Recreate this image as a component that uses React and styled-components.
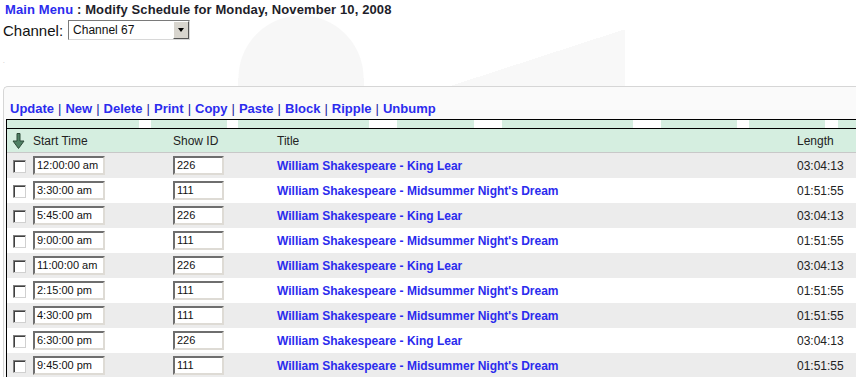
import React from 'react';
import styled, { createGlobalStyle } from 'styled-components';

const GlobalStyle = createGlobalStyle`
  body {
    margin: 0;
    font-family: 'Liberation Sans', Arial, sans-serif;
    color: #222;
    background-color: #fff;
    background-image:
      radial-gradient(circle 63px at 301px 78px, #f7f7f7 62px, transparent 63px),
      linear-gradient(#f7f7f7, #f7f7f7),
      linear-gradient(162deg, transparent 52%, #f8f8f8 52%);
    background-repeat: no-repeat;
    background-position: 0 0, 238px 78px, 420px 30px;
    background-size: auto, 126px 20px, 205px 60px;
    overflow: hidden;
  }
`;

const Page = styled.div`
  width: 856px;
  height: 377px;
  overflow: hidden;
`;

const Heading = styled.div`
  padding: 3px 0 0 5px;
  font-size: 13px;
  line-height: 14px;
  font-weight: bold;
  letter-spacing: 0.12px;
  color: #1e1e2a;
`;

const MenuLink = styled.a`
  color: #2b2bee;
  text-decoration: none;
`;

const ChannelRow = styled.div`
  display: flex;
  align-items: center;
  gap: 5px;
  margin-top: 3px;
  padding-left: 3px;
  font-size: 15px;
  color: #111;
`;

const Select = styled.div`
  display: flex;
  width: 122px;
  height: 20px;
  box-sizing: border-box;
  border-top: 1px solid #7a7a7a;
  border-left: 1px solid #7a7a7a;
  border-right: 1px solid #d8d8d8;
  border-bottom: 1px solid #d8d8d8;
  background: #fff;
  font-size: 12px;
`;

const SelectText = styled.div`
  flex: 1;
  padding: 2px 0 0 4px;
  color: #111;
`;

const SelectButton = styled.div`
  width: 16px;
  background: #d8d5ce;
  border: 1px solid;
  border-color: #fff #555 #555 #fff;
  box-sizing: border-box;
  display: flex;
  align-items: center;
  justify-content: center;

  &::after {
    content: '';
    border-left: 3.5px solid transparent;
    border-right: 3.5px solid transparent;
    border-top: 4px solid #000;
  }
`;

const Speck = styled.div`
  height: 46px;
  padding: 18px 0 0 3px;
  box-sizing: border-box;
  font-size: 6px;
  color: #999;
  line-height: 6px;
`;

const Panel = styled.div`
  margin-left: 3px;
  border-top: 1px solid #d6d6d6;
  border-left: 1px solid #d6d6d6;
  border-top-left-radius: 5px;
  background: #fafafa;
`;

const Toolbar = styled.div`
  display: flex;
  align-items: center;
  padding: 11px 0 0 6px;
  height: 21px;
  font-size: 13px;
  font-weight: bold;
`;

const ToolLink = styled.a`
  color: #2b2bee;
  text-decoration: none;
`;

const Sep = styled.span`
  color: #2020a0;
  font-weight: normal;
  margin: 0 4px;
`;

const Table = styled.div`
  margin: 0 0 0 2px;
  border-top: 1px solid #000;
  border-left: 1px solid #000;
  background: #fff;
`;

const Strip = styled.div`
  display: flex;
  height: 8px;
  border-bottom: 1px solid #000;
  background: #fff;
`;

const StripCell = styled.div`
  flex: none;
  width: ${p => p.$w}px;
  margin-right: ${p => p.$gap}px;
  background: #d5eee0;
`;

const Row = styled.div`
  display: grid;
  grid-template-columns: 26px 140px 104px 520px 1fr;
  align-items: center;
  height: ${p => (p.$head ? 23 : 25)}px;
  background: ${p => (p.$head ? '#d5eee0' : p.$shade ? '#ececec' : '#fff')};
  border-bottom: ${p => (p.$head ? '1px solid #c8c8c8' : 'none')};
  font-size: 12px;
  color: #222;
`;

const Cell = styled.div`
  padding-left: ${p => p.$pad || 0}px;
  display: flex;
  align-items: center;
`;

const Check = styled.span`
  display: inline-block;
  width: 13px;
  height: 13px;
  box-sizing: border-box;
  border: 1px solid;
  border-color: #808080 #d0d0d0 #d0d0d0 #808080;
  background: #fff;
  box-shadow: inset 1px 1px 0 #404040;
  margin-top: 1px;
`;

const Field = styled.div`
  width: ${p => p.$w}px;
  height: 19px;
  box-sizing: border-box;
  border: 2px solid;
  border-color: #6e6e6e #dedbd5 #dedbd5 #6e6e6e;
  background: #fff;
  font-size: 11px;
  line-height: 15px;
  padding-left: 2px;
  color: #111;
`;

const TitleLink = styled.a`
  color: #2b2bee;
  font-weight: bold;
  text-decoration: none;
`;

const SortArrow = () => (
  <svg width="13" height="16" viewBox="0 0 13 16">
    <path d="M5 0.5 H8 V8 H12 L6.5 15.5 L1 8 H5 Z" fill="#4f8064" stroke="#2d4a38" strokeWidth="1" />
  </svg>
);

const tools = ['Update', 'New', 'Delete', 'Print', 'Copy', 'Paste', 'Block', 'Ripple', 'Unbump'];

const strip = [
  [132, 12], [76, 11], [131, 28], [77, 28], [131, 28], [76, 12], [76, 13], [60, 0],
];

const LEAR = 'William Shakespeare - King Lear';
const DREAM = "William Shakespeare - Midsummer Night's Dream";

const rows = [
  ['12:00:00 am', '226', LEAR, '03:04:13'],
  ['3:30:00 am', '111', DREAM, '01:51:55'],
  ['5:45:00 am', '226', LEAR, '03:04:13'],
  ['9:00:00 am', '111', DREAM, '01:51:55'],
  ['11:00:00 am', '226', LEAR, '03:04:13'],
  ['2:15:00 pm', '111', DREAM, '01:51:55'],
  ['4:30:00 pm', '111', DREAM, '01:51:55'],
  ['6:30:00 pm', '226', LEAR, '03:04:13'],
  ['9:45:00 pm', '111', DREAM, '01:51:55'],
];

export default function App() {
  return (
    <Page>
      <GlobalStyle />
      <Heading>
        <MenuLink href="#">Main Menu</MenuLink> : Modify Schedule for Monday, November 10, 2008
      </Heading>
      <ChannelRow>
        Channel:
        <Select>
          <SelectText>Channel 67</SelectText>
          <SelectButton />
        </Select>
      </ChannelRow>
      <Speck>.</Speck>
      <Panel>
        <Toolbar>
          {tools.map((t, i) => (
            <React.Fragment key={t}>
              {i > 0 && <Sep>|</Sep>}
              <ToolLink href="#">{t}</ToolLink>
            </React.Fragment>
          ))}
        </Toolbar>
        <Table>
          <Strip>
            {strip.map(([w, gap], i) => (
              <StripCell key={i} $w={w} $gap={gap} />
            ))}
          </Strip>
          <Row $head>
            <Cell $pad={5}><SortArrow /></Cell>
            <Cell>Start Time</Cell>
            <Cell>Show ID</Cell>
            <Cell>Title</Cell>
            <Cell>Length</Cell>
          </Row>
          {rows.map(([time, id, title, len], i) => (
            <Row key={i} $shade={i % 2 === 0}>
              <Cell $pad={6}><Check /></Cell>
              <Cell><Field $w={72}>{time}</Field></Cell>
              <Cell><Field $w={51}>{id}</Field></Cell>
              <Cell><TitleLink href="#">{title}</TitleLink></Cell>
              <Cell>{len}</Cell>
            </Row>
          ))}
        </Table>
      </Panel>
    </Page>
  );
}
